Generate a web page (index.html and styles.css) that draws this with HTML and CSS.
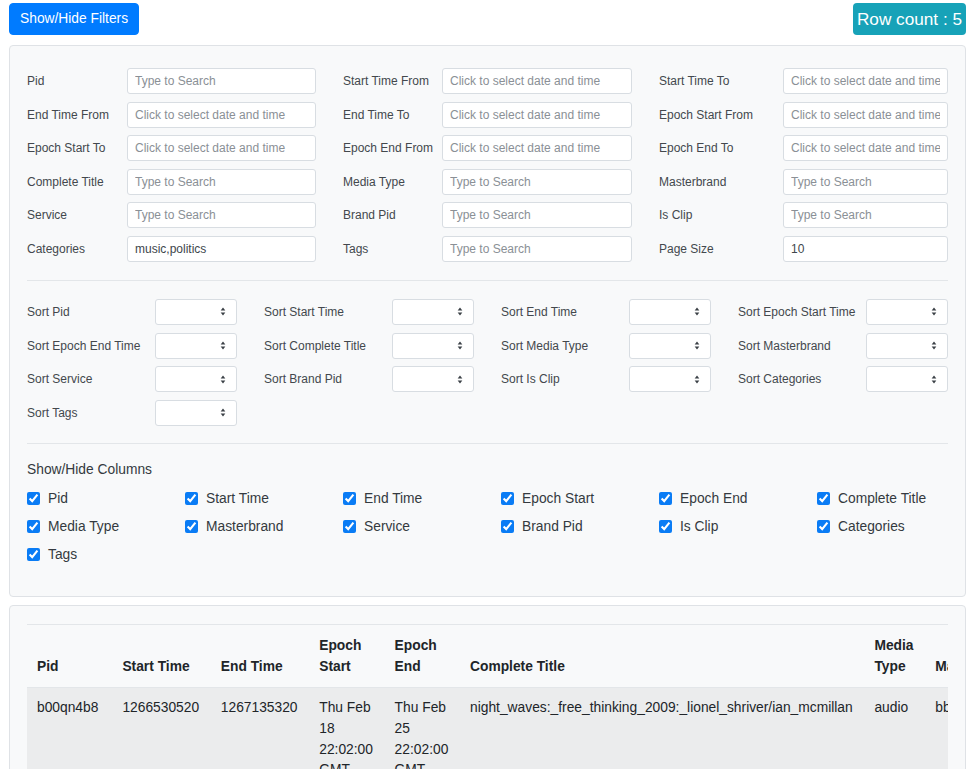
FILE: index.html
```html
<!DOCTYPE html>
<html lang="en">
<head>
<meta charset="utf-8">
<title>Programmes</title>
<link rel="stylesheet" href="styles.css">
</head>
<body>
<div class="page">
  <div class="topbar">
    <button class="btn-primary" type="button">Show/Hide Filters</button>
    <span class="badge-count">Row count : 5</span>
  </div>

  <section class="card filters-card">
    <div class="filter-grid">
      <div class="field"><label>Pid</label><input type="text" placeholder="Type to Search"></div>
      <div class="field"><label>Start Time From</label><input type="text" placeholder="Click to select date and time"></div>
      <div class="field"><label>Start Time To</label><input type="text" placeholder="Click to select date and time"></div>

      <div class="field"><label>End Time From</label><input type="text" placeholder="Click to select date and time"></div>
      <div class="field"><label>End Time To</label><input type="text" placeholder="Click to select date and time"></div>
      <div class="field"><label>Epoch Start From</label><input type="text" placeholder="Click to select date and time"></div>

      <div class="field"><label>Epoch Start To</label><input type="text" placeholder="Click to select date and time"></div>
      <div class="field"><label>Epoch End From</label><input type="text" placeholder="Click to select date and time"></div>
      <div class="field"><label>Epoch End To</label><input type="text" placeholder="Click to select date and time"></div>

      <div class="field"><label>Complete Title</label><input type="text" placeholder="Type to Search"></div>
      <div class="field"><label>Media Type</label><input type="text" placeholder="Type to Search"></div>
      <div class="field"><label>Masterbrand</label><input type="text" placeholder="Type to Search"></div>

      <div class="field"><label>Service</label><input type="text" placeholder="Type to Search"></div>
      <div class="field"><label>Brand Pid</label><input type="text" placeholder="Type to Search"></div>
      <div class="field"><label>Is Clip</label><input type="text" placeholder="Type to Search"></div>

      <div class="field"><label>Categories</label><input type="text" value="music,politics" placeholder="Type to Search"></div>
      <div class="field"><label>Tags</label><input type="text" placeholder="Type to Search"></div>
      <div class="field"><label>Page Size</label><input type="text" value="10"></div>
    </div>

    <hr class="divider">

    <div class="sort-grid">
      <div class="field"><label>Sort Pid</label><div class="select"><select><option></option><option>asc</option><option>desc</option></select><svg class="caret" viewBox="0 0 6 10"><path d="M3 0.5L5.6 4H0.4z M3 9.5L0.4 6h5.2z"/></svg></div></div>
      <div class="field"><label>Sort Start Time</label><div class="select"><select><option></option><option>asc</option><option>desc</option></select><svg class="caret" viewBox="0 0 6 10"><path d="M3 0.5L5.6 4H0.4z M3 9.5L0.4 6h5.2z"/></svg></div></div>
      <div class="field"><label>Sort End Time</label><div class="select"><select><option></option><option>asc</option><option>desc</option></select><svg class="caret" viewBox="0 0 6 10"><path d="M3 0.5L5.6 4H0.4z M3 9.5L0.4 6h5.2z"/></svg></div></div>
      <div class="field"><label>Sort Epoch Start Time</label><div class="select"><select><option></option><option>asc</option><option>desc</option></select><svg class="caret" viewBox="0 0 6 10"><path d="M3 0.5L5.6 4H0.4z M3 9.5L0.4 6h5.2z"/></svg></div></div>

      <div class="field"><label>Sort Epoch End Time</label><div class="select"><select><option></option><option>asc</option><option>desc</option></select><svg class="caret" viewBox="0 0 6 10"><path d="M3 0.5L5.6 4H0.4z M3 9.5L0.4 6h5.2z"/></svg></div></div>
      <div class="field"><label>Sort Complete Title</label><div class="select"><select><option></option><option>asc</option><option>desc</option></select><svg class="caret" viewBox="0 0 6 10"><path d="M3 0.5L5.6 4H0.4z M3 9.5L0.4 6h5.2z"/></svg></div></div>
      <div class="field"><label>Sort Media Type</label><div class="select"><select><option></option><option>asc</option><option>desc</option></select><svg class="caret" viewBox="0 0 6 10"><path d="M3 0.5L5.6 4H0.4z M3 9.5L0.4 6h5.2z"/></svg></div></div>
      <div class="field"><label>Sort Masterbrand</label><div class="select"><select><option></option><option>asc</option><option>desc</option></select><svg class="caret" viewBox="0 0 6 10"><path d="M3 0.5L5.6 4H0.4z M3 9.5L0.4 6h5.2z"/></svg></div></div>

      <div class="field"><label>Sort Service</label><div class="select"><select><option></option><option>asc</option><option>desc</option></select><svg class="caret" viewBox="0 0 6 10"><path d="M3 0.5L5.6 4H0.4z M3 9.5L0.4 6h5.2z"/></svg></div></div>
      <div class="field"><label>Sort Brand Pid</label><div class="select"><select><option></option><option>asc</option><option>desc</option></select><svg class="caret" viewBox="0 0 6 10"><path d="M3 0.5L5.6 4H0.4z M3 9.5L0.4 6h5.2z"/></svg></div></div>
      <div class="field"><label>Sort Is Clip</label><div class="select"><select><option></option><option>asc</option><option>desc</option></select><svg class="caret" viewBox="0 0 6 10"><path d="M3 0.5L5.6 4H0.4z M3 9.5L0.4 6h5.2z"/></svg></div></div>
      <div class="field"><label>Sort Categories</label><div class="select"><select><option></option><option>asc</option><option>desc</option></select><svg class="caret" viewBox="0 0 6 10"><path d="M3 0.5L5.6 4H0.4z M3 9.5L0.4 6h5.2z"/></svg></div></div>

      <div class="field"><label>Sort Tags</label><div class="select"><select><option></option><option>asc</option><option>desc</option></select><svg class="caret" viewBox="0 0 6 10"><path d="M3 0.5L5.6 4H0.4z M3 9.5L0.4 6h5.2z"/></svg></div></div>
    </div>

    <hr class="divider divider-tight">

    <div class="columns-title">Show/Hide Columns</div>
    <div class="check-grid">
      <label class="check"><input type="checkbox" checked><span>Pid</span></label>
      <label class="check"><input type="checkbox" checked><span>Start Time</span></label>
      <label class="check"><input type="checkbox" checked><span>End Time</span></label>
      <label class="check"><input type="checkbox" checked><span>Epoch Start</span></label>
      <label class="check"><input type="checkbox" checked><span>Epoch End</span></label>
      <label class="check"><input type="checkbox" checked><span>Complete Title</span></label>
      <label class="check"><input type="checkbox" checked><span>Media Type</span></label>
      <label class="check"><input type="checkbox" checked><span>Masterbrand</span></label>
      <label class="check"><input type="checkbox" checked><span>Service</span></label>
      <label class="check"><input type="checkbox" checked><span>Brand Pid</span></label>
      <label class="check"><input type="checkbox" checked><span>Is Clip</span></label>
      <label class="check"><input type="checkbox" checked><span>Categories</span></label>
      <label class="check"><input type="checkbox" checked><span>Tags</span></label>
    </div>
  </section>

  <section class="card table-card">
    <div class="table-wrap">
      <table class="table">
        <thead>
          <tr>
            <th>Pid</th><th>Start Time</th><th>End Time</th><th>Epoch Start</th><th>Epoch End</th><th>Complete Title</th><th>Media Type</th><th>Masterbrand</th><th>Service</th><th>Brand Pid</th><th>Is Clip</th><th>Categories</th><th>Tags</th>
          </tr>
        </thead>
        <tbody>
          <tr>
            <td>b00qn4b8</td><td>1266530520</td><td>1267135320</td><td>Thu Feb 18 22:02:00 GMT 2010</td><td>Thu Feb 25 22:02:00 GMT 2010</td><td>night_waves:_free_thinking_2009:_lionel_shriver/ian_mcmillan</td><td>audio</td><td>bbc_radio_three</td><td>bbc_radio_three</td><td>b006tp52</td><td>0</td><td>music,politics</td><td></td>
          </tr>
          <tr>
            <td>b00qnwb8</td><td>1266444120</td><td>1267048920</td><td>Wed Feb 17 22:02:00 GMT 2010</td><td>Wed Feb 24 22:02:00 GMT 2010</td><td>night_waves:_free_thinking_2009:_festival_debate</td><td>audio</td><td>bbc_radio_three</td><td>bbc_radio_three</td><td>b006tp52</td><td>0</td><td>music,politics</td><td></td>
          </tr>
          <tr>
            <td>b00qk2x7</td><td>1266357720</td><td>1266962520</td><td>Tue Feb 16 22:02:00 GMT 2010</td><td>Tue Feb 23 22:02:00 GMT 2010</td><td>night_waves:_2010:_politics_and_music</td><td>audio</td><td>bbc_radio_three</td><td>bbc_radio_three</td><td>b006tp52</td><td>0</td><td>music,politics</td><td></td>
          </tr>
          <tr>
            <td>b00qh6d3</td><td>1266271320</td><td>1266876120</td><td>Mon Feb 15 22:02:00 GMT 2010</td><td>Mon Feb 22 22:02:00 GMT 2010</td><td>night_waves:_2010:_composers_and_power</td><td>audio</td><td>bbc_radio_three</td><td>bbc_radio_three</td><td>b006tp52</td><td>0</td><td>music,politics</td><td></td>
          </tr>
          <tr>
            <td>b00qf1c9</td><td>1266012120</td><td>1266616920</td><td>Fri Feb 12 22:02:00 GMT 2010</td><td>Fri Feb 19 22:02:00 GMT 2010</td><td>night_waves:_2010:_protest_songs</td><td>audio</td><td>bbc_radio_three</td><td>bbc_radio_three</td><td>b006tp52</td><td>0</td><td>music,politics</td><td></td>
          </tr>
        </tbody>
      </table>
    </div>
  </section>
</div>
</body>
</html>
```

FILE: styles.css
```css
* { box-sizing: border-box; }

html, body { margin: 0; padding: 0; }

body {
  font-family: "Liberation Sans", Arial, Helvetica, sans-serif;
  font-size: 13.8px;
  line-height: 1.5;
  color: #212529;
  background: #ffffff;
}

.page {
  padding: 3px 9px 0;
}

.topbar {
  display: flex;
  justify-content: space-between;
  align-items: flex-start;
}

.btn-primary {
  height: 32px;
  padding: 0 10px;
  border: 1px solid #007bff;
  border-radius: 4px;
  background: #007bff;
  color: #ffffff;
  font-family: inherit;
  font-size: 13.8px;
  line-height: 30px;
}

.badge-count {
  height: 32px;
  padding: 0 4px;
  border-radius: 4px;
  background: #17a2b8;
  color: #ffffff;
  font-size: 17.2px;
  line-height: 32px;
}

.card {
  background: #f8f9fa;
  border: 1px solid #dfe2e6;
  border-radius: 4px;
}

.filters-card {
  margin-top: 10px;
  padding: 22px 17px 22px;
}

.field {
  display: flex;
  align-items: center;
}

.field label {
  font-size: 12px;
  line-height: 16px;
  color: #43484d;
  white-space: nowrap;
}

.filter-grid {
  display: grid;
  grid-template-columns: repeat(3, 289px);
  column-gap: 27px;
  row-gap: 7.6px;
}

.filter-grid .field label { flex: 0 0 100px; }
.filter-grid .field:nth-child(3n+2) label { flex-basis: 99px; }
.filter-grid .field:nth-child(3n) label { flex-basis: 124px; }

.filter-grid input {
  flex: 1 1 auto;
  min-width: 0;
  height: 26px;
  padding: 0 7px;
  border: 1px solid #d8dde2;
  border-radius: 3px;
  background: #ffffff;
  font-family: inherit;
  font-size: 12px;
  color: #40464c;
}

.filter-grid input::placeholder {
  color: #8a9096;
  opacity: 1;
}

.divider {
  border: 0;
  border-top: 1px solid #e3e6e9;
  margin: 18px 0;
}

.divider-tight {
  margin: 17px 0 16px;
}

.sort-grid {
  display: grid;
  grid-template-columns: repeat(4, 210px);
  column-gap: 27px;
  row-gap: 7.65px;
}

.sort-grid .field label { flex: 0 0 128px; }

.select {
  position: relative;
  flex: 0 0 82px;
  height: 26px;
}

.select select {
  display: block;
  width: 100%;
  height: 26px;
  padding: 0 20px 0 7px;
  border: 1px solid #d8dde2;
  border-radius: 3px;
  background: #ffffff;
  font-family: inherit;
  font-size: 12px;
  color: #40464c;
  appearance: none;
  -webkit-appearance: none;
}

.caret {
  position: absolute;
  right: 11px;
  top: 8.5px;
  width: 6px;
  height: 9px;
  fill: #3b4046;
  pointer-events: none;
}

.columns-title {
  font-size: 13.8px;
  line-height: 20px;
  color: #343a40;
}

.check-grid {
  display: grid;
  grid-template-columns: repeat(6, 158px);
  grid-auto-rows: 28px;
  margin-top: 5px;
  margin-bottom: 5px;
}

.check {
  display: flex;
  align-items: center;
  font-size: 13.8px;
  color: #343a40;
}

.check input {
  width: 13px;
  height: 13px;
  margin: 0 8px 0 0;
  accent-color: #0a7cf5;
}

.table-card {
  margin-top: 8px;
  padding: 18px 17px 18px;
}

.table-wrap {
  overflow: hidden;
  border-top: 1px solid #e3e6e9;
}

.table {
  border-collapse: collapse;
  font-size: 13.8px;
  line-height: 20.7px;
  color: #212529;
}

.table th,
.table td {
  padding: 10.3px 11.7px 10.3px 10px;
  text-align: left;
  vertical-align: top;
}

.table thead th {
  padding-top: 11.3px;
  padding-bottom: 9.3px;
  vertical-align: bottom;
  font-weight: bold;
  border-bottom: 1px solid #e3e6e9;
}

.table tbody tr:nth-child(odd) {
  background: #ebeced;
}
```
